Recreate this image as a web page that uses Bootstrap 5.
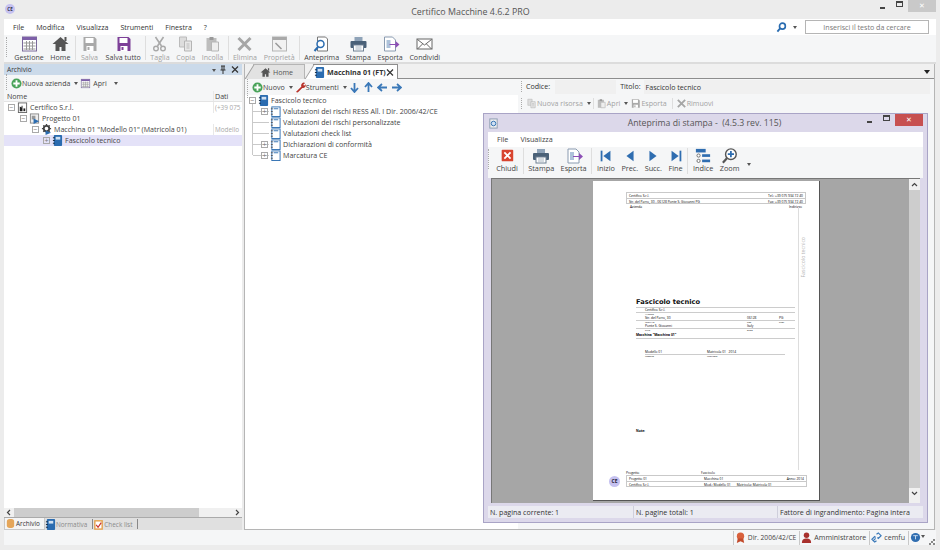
<!DOCTYPE html>
<html lang="it">
<head>
<meta charset="utf-8">
<title>Certifico Macchine</title>
<link href="https://cdn.jsdelivr.net/npm/bootstrap@5.3.1/dist/css/bootstrap.min.css" rel="stylesheet">
<script src="https://cdn.jsdelivr.net/npm/bootstrap@5.3.1/dist/js/bootstrap.bundle.min.js"></script>
<style>
html,body {height:550px;overflow:hidden;}
body {background:#ececec;color:#444;font-family:"Open Sans","Liberation Sans",sans-serif;font-size:7.1px;line-height:11px;}
.app {width:940px;height:550px;position:relative;}
.ttl-bar {height:19px;background:#ececec;}
.ttl-txt {font-size:8.9px;color:#555;line-height:15px;padding-left:52px;}
.app-logo {width:10px;height:10px;border-radius:50%;background:#c5c1f0;color:#334;font-size:4.5px;line-height:10px;text-align:center;font-weight:700;margin:4px 0 0 5px;flex:none;}
.win-btn {width:17px;height:12px;color:#555;}
.win-close {width:28px;height:12px;background:#c9c9c9;color:#fff;margin-right:4px;font-size:7px;line-height:11px;text-align:center;}
.win-min {width:5px;height:2px;background:#444;margin:7px auto 0;}
.win-max {width:7px;height:6px;border:1px solid #444;border-top-width:2px;margin:1px auto 0;}
.menu-bar {height:16px;background:#fff;margin:0 4px;padding-left:9px;gap:12px;color:#333;font-size:7.1px;}
.srch-box {width:124px;height:14px;border:1px solid #b5b5b5;color:#777;text-align:center;line-height:12px;margin-right:7px;font-size:7.1px;}
.main-tb {height:29px;background:#f5f6f7;margin:0 4px;border-bottom:2px solid #dcdcdc;}
.grip {width:2px;height:20px;border-left:1px dotted #aaa;margin:2px 3px 0 2px;flex:none;}
.tb-item {padding:1px 3.3px 0;text-align:center;white-space:nowrap;color:#444;}
.tb-item svg {display:block;margin:0 auto;height:16px;width:19px;}
.tb-off {color:#a2a2a2;}
.tb-sep {width:1px;height:24px;background:#dedede;margin:1px;flex:none;}
.save-off {color:#a9a9a9;}
.save-all {color:#7d3f98;}
.work {height:466px;margin:0 5px 0 4px;gap:2px;}
.side {width:238px;background:#fff;}
.side-hd {height:11px;background:#cbdaea;padding:0 3px;color:#333;font-size:6.6px;}
.hd-ic {width:8px;height:9px;flex:none;}
.hd-pin {margin:0 4px 0 1px;}
.side-tb {height:16px;background:#f5f6f7;color:#444;font-size:7px;}
.col-hd {height:11px;background:#f5f6f7;border-bottom:1px solid #e4e4e4;padding:0 0 0 3px;}
.col-dati {width:29px;border-left:1px solid #e8e8e8;padding-left:1px;overflow:hidden;white-space:nowrap;flex:none;}
.tr-row {height:11px;white-space:nowrap;position:relative;}
.tr-sel {background:#e4e2f8;}
.tr-name {flex:1;}
.gray-t {color:#a8a8a8;font-size:6.4px;}
.tog {width:7px;height:7px;border:1px solid #a9a9a9;color:#777;font-size:7px;line-height:5px;text-align:center;flex:none;margin-right:2px;position:relative;}
.tog-off {visibility:hidden;}
.ind1 {padding-left:4px;}
.ind2 {padding-left:16px;}
.ind3 {padding-left:28px;}
.ind4 {padding-left:39px;}
.ic12 {width:11px;height:11px;flex:none;margin-right:2px;}
.hsb {height:9px;margin-top:auto;background:#f0f0f0;color:#555;align-items:center;}
.hsb svg {width:10px;height:9px;flex:none;}
.hsb-bar {width:185px;background:#cdcdcd;height:9px;}
.side-tabs {height:13px;background:#e0e0e0;border-top:1px solid #aaa;font-size:6.4px;}
.stab {padding:0 5px 0 0;color:#8a8a8a;border-right:1px solid #888;margin:1px 0;}
.stab .ic12 {margin-right:0;}
.stab-on {background:#f5f5f5;color:#333;border:1px solid #c9c9c9;border-top:0;margin:0 0 0 0;padding-right:4px;}
.right {flex:1;background:#fff;border-left:1px solid #b5b5b5;border-right:1px solid #b5b5b5;border-bottom:1px solid #b5b5b5;}
.tabs-row {height:15px;background:#f0f0f0;border-bottom:1px solid #8d8d8d;padding-left:8px;}
.tab-a {height:15px;padding:0 4px 0 7px;position:relative;}
.tab-a::before {content:"";position:absolute;left:-4px;top:-0px;bottom:0;width:9px;transform:skewX(-32deg);background:inherit;border-left:1px solid #9c9c9c;}
.tab-a > * {position:relative;}
.tab-h {width:52px;background:#e2e2e2;border:1px solid #b5b5b5;border-width:1px 1px 0 0;color:#555;}
.tab-m {width:85px;margin-left:8px;padding-left:1px;background:#fff;border:1px solid #8d8d8d;border-width:1px 1px 0 0;height:15px;font-weight:700;font-size:7.1px;color:#333;}
.tab-arrow {width:0;height:0;border:3px solid transparent;border-top:4px solid #222;margin:6px 4px 0 auto;}
.right-body {height:calc(100% - 15px);}
.tree-pane {width:273px;}
.pane-tb {height:16px;background:#f5f6f7;color:#444;}
.tree2 {padding:0 0 0 4px;position:relative;}
.tree2::before {content:"";position:absolute;left:7px;top:8px;height:52px;border-left:1px solid #c9c9c9;}
.tr-kid {padding-left:12px;}
.tr-kid::before {content:"";position:absolute;left:4px;top:5px;width:16px;border-top:1px solid #c9c9c9;}
.tr-kid > * {position:relative;}
.det-pane {flex:1;background:#f5f6f7;}
.det-row1 {height:15px;color:#333;padding-left:1px;}
.det-row1 .grip {height:11px;margin-top:0;}
.det-fld {background:#f0f0f0;height:14px;line-height:14px;}
.cod-fld {width:61px;margin:0 4px 0 5px;}
.title-fld {flex:1;margin:0 4px 0 3px;padding-left:2px;}
.det-row2 {height:16px;color:#a2a2a2;padding-left:1px;margin-top:1px;}
.det-row2 .grip {height:11px;margin-top:0;}
.det-row2 .tb-sep {height:11px;margin:0 2px 0 0;}
.det-row2 .sep-w {margin:0 3px 0 5px;}
.arw {width:11px;height:11px;flex:none;margin-right:3px;}
.caret-s {width:0;height:0;border:2.5px solid transparent;border-top:3px solid #555;margin:3px 2px 0 4px;flex:none;}
.car-apri {margin-left:7px;}
.status {height:15px;margin:0 4px;background:#f5f6f7;justify-content:flex-end;color:#444;}
.st-item {padding:0 3px 0 1px;border-left:1px solid #c8c8c8;height:14px;white-space:nowrap;}
.st-dir {font-size:6.7px;}
.st-grip {width:8px;height:14px;flex:none;}
.st-grip svg {display:block;margin:8px 0 0 1px;width:6px;height:6px;}
.prev-win {position:absolute;left:483px;top:113px;width:445px;height:410px;background:#dcd8ea;border:1px solid #a9a4c6;}
.prev-tt {height:18px;color:#555;}
.prev-title {flex:1;text-align:center;padding-left:47px;font-size:8.7px;white-space:pre;}
.prev-close {width:28px;height:12px;background:#c75050;color:#fff;text-align:center;font-size:7px;line-height:11px;margin-right:4px;align-self:flex-start;}
.prev-tt .win-btn {align-self:flex-start;}
.prev-menu {height:15px;background:#fff;margin:0 4px;padding-left:9px;gap:12px;font-size:7.2px;}
.prev-tb {height:31px;background:#f5f6f7;margin:0 4px;font-size:7.3px;}
.prev-tb .grip {margin-left:0;}
.prev-tb .tb-item {padding:1px 3.2px 0;line-height:9px;display:flex;flex-direction:column;align-items:center;}
.prev-tb .tb-item svg {height:16px;width:20px;margin:0 -5px;flex:none;}
.prev-tb .tb-sep {height:26px;margin:1px 1.5px 0;}
.prev-area {height:325px;margin:0 7px;background:#a6a6a6;border:1px solid #777;border-width:1px 0 0 1px;}
.sheet {width:227px;height:320px;margin:2px 0 0 101px;background:#fff;border-right:1px solid #555;border-bottom:1px solid #555;padding:11px 13px 0 33px;position:relative;flex:none;}
.vsb {width:11px;margin-left:auto;background:#f0f0f0;}
.vsb svg {display:block;width:11px;height:11px;}
.vsb-bar {height:298px;background:#cdcdcd;}
.tiny {font-size:3.3px;line-height:5px;color:#000;white-space:nowrap;}
.hd-box {border:1px solid #c9c9c9;}
.hd-line {height:5px;padding:0 2px;}
.hd-line + .hd-line {border-top:1px solid #c9c9c9;}
.rail {position:absolute;left:205px;top:26px;width:9px;height:263px;border-left:1px solid #ddd;color:#b5b5b5;font-size:5.2px;}
.rail-txt {writing-mode:vertical-rl;transform:rotate(180deg);margin-top:30px;line-height:9px;}
.doc-title {font-size:6.7px;font-weight:700;line-height:10px;margin:88px 0 0 10px;color:#111;font-family:"DejaVu Sans",sans-serif;}
.doc-sec {margin-left:10px;width:159px;border-top:1px solid #ccc;}
.doc-val {height:4px;line-height:4px;padding-left:9px;border-bottom:1px solid #ccc;box-sizing:content-box;}
.doc-lab {height:3px;line-height:3px;padding-left:9px;font-size:2.4px;}
.cell-a {width:102px;}
.cell-b {width:32px;}
.doc-mac {height:5px;line-height:5px;font-weight:700;border-bottom:1px solid #ccc;padding-bottom:1px;box-sizing:content-box;}
.doc-mod {margin:11px 0 0 19px;width:140px;}
.doc-mod .doc-val {padding-left:0;}
.doc-mod .doc-lab {padding-left:0;}
.cell-m {width:62px;}
.doc-note {margin:70px 0 0 10px;font-weight:700;}
.sheet-ft {position:absolute;left:16px;top:289px;}
.ft-logo {width:11px;height:11px;border-radius:50%;background:#c5c1f0;color:#223;font-size:5px;line-height:11px;text-align:center;font-weight:700;margin:6px 6px 0 0;flex:none;}
.ft-box {width:181px;border:1px solid #c9c9c9;}
.ft-cell {width:75px;}
.prev-stat {height:12px;margin:3px 4px 0;background:#ebebf2;color:#333;}
.pst {padding:0 2px;line-height:12px;white-space:pre;}
.pst-a {width:145px;}
.pst-b {width:144px;}
.pst + .pst {border-left:1px solid #cfcfdc;}
</style>
</head>
<body>
<svg class="d-none" xmlns="http://www.w3.org/2000/svg">
<symbol id="i-cal" viewBox="0 0 18 16"><rect x="2" y="1" width="14" height="14" fill="#fff" stroke="#7a6a9a"/><rect x="2" y="1" width="14" height="3" fill="#7d5fa8"/><path d="M3 7h12M3 10h12M3 13h12M6 5v9M9 5v9M12 5v9" stroke="#999"/></symbol>
<symbol id="i-home" viewBox="0 0 18 16"><path d="M9 1 1 8h3v7h4v-4h2v4h4V8h3z" fill="#555"/><rect x="13" y="1" width="2" height="4" fill="#555"/></symbol>
<symbol id="i-save" viewBox="0 0 18 16"><path d="M3 1h11l2 2v12H3z" fill="currentColor"/><rect x="5" y="2" width="8" height="5" fill="#fff"/><rect x="6" y="10" width="7" height="5" fill="#fff"/><rect x="7" y="11" width="2" height="3" fill="currentColor"/></symbol>
<symbol id="i-cut" viewBox="0 0 18 16"><path d="M5 1l6 9M13 1 7 10" stroke="#a9a9a9" stroke-width="1.6" fill="none"/><circle cx="5.5" cy="12.5" r="2.3" fill="none" stroke="#a9a9a9" stroke-width="1.4"/><circle cx="12.5" cy="12.5" r="2.3" fill="none" stroke="#a9a9a9" stroke-width="1.4"/></symbol>
<symbol id="i-copy" viewBox="0 0 18 16"><path d="M3 1h7v10H3z" fill="#ddd" stroke="#bbb"/><path d="M8 5h7v10H8z" fill="#e8e8e8" stroke="#b5b5b5"/><path d="M10 8h3M10 10h3M10 12h3" stroke="#bbb"/></symbol>
<symbol id="i-paste" viewBox="0 0 18 16"><rect x="3" y="2" width="10" height="13" fill="#bdbdbd"/><rect x="6" y="1" width="4" height="3" fill="#999"/><path d="M8 6h7v9H8z" fill="#eee" stroke="#b5b5b5"/></symbol>
<symbol id="i-del" viewBox="0 0 18 16"><path d="M3 2l12 12M15 2 3 14" stroke="#a6a6a6" stroke-width="3"/></symbol>
<symbol id="i-prop" viewBox="0 0 18 16"><rect x="2" y="1" width="14" height="14" fill="#f2f2f2" stroke="#b5b5b5"/><rect x="2" y="1" width="14" height="3" fill="#a9a9a9"/><path d="M5 7l6 6" stroke="#999" stroke-width="1.5"/></symbol>
<symbol id="i-prev" viewBox="0 0 18 16"><path d="M5 1h8l2 2v12H5z" fill="#fff" stroke="#777"/><circle cx="8" cy="8" r="3.5" fill="#fff" stroke="#2a6cb0" stroke-width="1.5"/><path d="M5.5 11 2 15" stroke="#2a6cb0" stroke-width="2"/></symbol>
<symbol id="i-print" viewBox="0 0 18 16"><rect x="5" y="1" width="8" height="4" fill="#8fa3b8"/><rect x="1" y="5" width="16" height="7" rx="1" fill="#4a6178"/><rect x="4" y="9" width="10" height="6" fill="#fff" stroke="#6d7f92"/><path d="M6 11h6M6 13h6" stroke="#a9b6c2"/></symbol>
<symbol id="i-exp" viewBox="0 0 18 16"><path d="M3 1h8l3 3v11H3z" fill="#fff" stroke="#8a9bb0"/><path d="M5 5h4M5 7h4M5 9h4M5 11h4" stroke="#5d86b5"/><path d="M8 8h6V5l4 3.5L14 12V9H8z" fill="#8c4fb5"/></symbol>
<symbol id="i-mail" viewBox="0 0 18 16"><rect x="1.500" y="3" width="15" height="10" fill="#fff" stroke="#666"/><path d="M2 3.500 9 9l7-5.500M2 13l5-5M16 13l-5-5" stroke="#666" fill="none"/></symbol>
<symbol id="i-plus" viewBox="0 0 12 12"><circle cx="6" cy="6" r="5.500" fill="#4aa35a"/><path d="M6 2.500v7M2.500 6h7" stroke="#fff" stroke-width="2"/></symbol>
<symbol id="i-wr" viewBox="0 0 12 12"><path d="M1 11 7 5a3 3 0 0 1 4-4L9 3l1 1 1.500-1.500A3 3 0 0 1 8 6.500L3 11.500z" fill="#b8322a"/></symbol>
<symbol id="i-book" viewBox="0 0 12 12"><rect x="2" y="0" width="9" height="12" rx="1" fill="#2b6cb0"/><rect x="4" y="2" width="5" height="3" fill="#cfe0f2"/><path d="M1 3h2M1 6h2M1 9h2" stroke="#123"/></symbol>
<symbol id="i-page" viewBox="0 0 12 12"><rect x="2" y="1" width="9" height="10.500" fill="#fff" stroke="#2b6cb0"/><path d="M4 3h5" stroke="#2b6cb0"/><path d="M1 3h2M1 6h2M1 9h2" stroke="#555"/></symbol>
<symbol id="i-co" viewBox="0 0 12 12"><rect x="1.500" y="1" width="9" height="10.500" fill="#fff" stroke="#666"/><path d="M3 10V5l2 1V4h1v6z" fill="#222"/><path d="M7 10V7h2v3z" fill="#222"/></symbol>
<symbol id="i-pj" viewBox="0 0 12 12"><rect x="1.500" y="1" width="9" height="10" fill="#eee" stroke="#888"/><rect x="3" y="3" width="4" height="4" fill="#999"/><path d="M5 6l6 3-6 3z" fill="#2b6cb0"/></symbol>
<symbol id="i-gear" viewBox="0 0 12 12"><circle cx="6" cy="5" r="3" fill="none" stroke="#444" stroke-width="2"/><path d="M6 0v2M6 8v2M1 5h2M9 5h2M2.500 1.500l1.500 1.500M8 7l1.500 1.500M9.500 1.500 8 3M4 7 2.500 8.500" stroke="#444" stroke-width="1.500"/><path d="M5 7l6 2.500L5 12z" fill="#2b6cb0"/></symbol>
<symbol id="i-down" viewBox="0 0 11 11"><path d="M5.500 1v8M2 6l3.500 4L9 6" stroke="#3a78b8" stroke-width="1.800" fill="none"/></symbol>
<symbol id="i-up" viewBox="0 0 11 11"><path d="M5.500 10V2M2 5l3.500-4L9 5" stroke="#3a78b8" stroke-width="1.800" fill="none"/></symbol>
<symbol id="i-left" viewBox="0 0 11 11"><path d="M10 5.500H2M5 2 1 5.500 5 9" stroke="#3a78b8" stroke-width="1.800" fill="none"/></symbol>
<symbol id="i-right" viewBox="0 0 11 11"><path d="M1 5.500h8M6 2l4 3.500L6 9" stroke="#3a78b8" stroke-width="1.800" fill="none"/></symbol>
<symbol id="i-lens" viewBox="0 0 12 12"><circle cx="7" cy="4.500" r="3.200" fill="none" stroke="#2a6cb0" stroke-width="1.800"/><path d="M4.500 7 1.500 10.500" stroke="#2a6cb0" stroke-width="2"/></symbol>
<symbol id="i-stop" viewBox="0 0 20 18"><rect x="4" y="2" width="13" height="13" rx="1" fill="#d8442f"/><path d="M7 5l7 7M14 5l-7 7" stroke="#fff" stroke-width="2"/></symbol>
<symbol id="i-first" viewBox="0 0 20 18"><rect x="4" y="3" width="2" height="12" fill="#2f6db0"/><path d="M15 3v12L7 9z" fill="#2f6db0"/></symbol>
<symbol id="i-prv" viewBox="0 0 20 18"><path d="M14 3v12L6 9z" fill="#2f6db0"/></symbol>
<symbol id="i-nxt" viewBox="0 0 20 18"><path d="M6 3v12l8-6z" fill="#2f6db0"/></symbol>
<symbol id="i-last" viewBox="0 0 20 18"><rect x="14" y="3" width="2" height="12" fill="#2f6db0"/><path d="M5 3v12l8-6z" fill="#2f6db0"/></symbol>
<symbol id="i-idx" viewBox="0 0 20 18"><rect x="2" y="1" width="11" height="4" fill="#2f6db0"/><rect x="9" y="7" width="9" height="3" fill="#2f6db0"/><rect x="9" y="13" width="9" height="3" fill="#2f6db0"/><circle cx="5" cy="8.500" r="1.800" fill="#fff" stroke="#666"/><circle cx="5" cy="14.500" r="1.800" fill="#fff" stroke="#666"/></symbol>
<symbol id="i-zoom" viewBox="0 0 20 18"><circle cx="11" cy="7" r="6" fill="#fff" stroke="#555" stroke-width="1.600"/><path d="M11 3.500v7M7.500 7h7" stroke="#2f6db0" stroke-width="2"/><path d="M6.500 11.500 2 16.500" stroke="#555" stroke-width="2.500"/></symbol>
<symbol id="i-doc" viewBox="0 0 12 12"><rect x="2" y="1" width="8" height="10" fill="#eee" stroke="#8a9bb0"/><circle cx="6" cy="6" r="2.500" fill="#cfe0f2" stroke="#2a6cb0"/></symbol>
<symbol id="i-rib" viewBox="0 0 12 12"><circle cx="6" cy="4.500" r="4" fill="#d8613c"/><path d="M3 7 2 12l4-2 4 2-1-5z" fill="#c24a2b"/></symbol>
<symbol id="i-user" viewBox="0 0 12 12"><circle cx="6" cy="3.500" r="3" fill="#a8302c"/><path d="M1 12c0-4 2-5 5-5s5 1 5 5z" fill="#a8302c"/></symbol>
<symbol id="i-link" viewBox="0 0 12 12"><path d="M2 10 5 7M6 2.500l2-1.500 3 3-3 3-1-1M6 9.500 4 11 1 8l3-3 1 1" stroke="#3a78b8" fill="none" stroke-width="1.300"/></symbol>
<symbol id="i-glob" viewBox="0 0 12 12"><circle cx="6" cy="6" r="5" fill="#2f6db0"/><path d="M3.500 4h5M6 4v4" stroke="#cfe0f2"/></symbol>
<symbol id="i-db" viewBox="0 0 12 12"><rect x="2" y="1" width="8" height="10" rx="3" fill="#e5a65a"/></symbol>
<symbol id="i-chk" viewBox="0 0 12 12"><rect x="2" y="2" width="8" height="9" fill="#fff" stroke="#e5a04a" stroke-width="1.500"/><path d="M3.500 6.500 5.500 9 9 4" stroke="#c9302c" fill="none" stroke-width="1.300"/></symbol>
<symbol id="i-pin" viewBox="0 0 8 9"><path d="M2 1h4M3 1v4M5 1v4M1.500 5h5M4 5v4" stroke="#333" fill="none"/></symbol>
<symbol id="i-x" viewBox="0 0 8 9"><path d="M1 1.500l6 6M7 1.500l-6 6" stroke="#333" stroke-width="1.200"/></symbol>
<symbol id="c-l" viewBox="0 0 10 9"><path d="M6 2 3.500 4.500 6 7" stroke="#444" stroke-width="1.200" fill="none"/></symbol>
<symbol id="c-r" viewBox="0 0 10 9"><path d="M4 2l2.500 2.500L4 7" stroke="#444" stroke-width="1.200" fill="none"/></symbol>
<symbol id="c-u" viewBox="0 0 11 11"><path d="M3 7l2.500-2.500L8 7" stroke="#444" stroke-width="1.200" fill="none"/></symbol>
<symbol id="c-d" viewBox="0 0 11 11"><path d="M3 4l2.500 2.500L8 4" stroke="#444" stroke-width="1.200" fill="none"/></symbol>
<symbol id="i-grp" viewBox="0 0 6 6"><path d="M4 0h2v2H4zM2 2h2v2H2zM0 4h2v2H0zM4 4h2v2H4z" fill="#888"/></symbol>
</svg>

<div class="app d-flex flex-column">

  <div class="ttl-bar d-flex">
    <div class="app-logo">CE</div>
    <div class="ttl-txt flex-grow-1 text-center pt-1">Certifico Macchine 4.6.2 PRO</div>
    <div class="win-btn"><div class="win-min"></div></div>
    <div class="win-btn"><div class="win-max"></div></div>
    <div class="win-close">✕</div>
  </div>

  <div class="menu-bar d-flex align-items-center">
    <span>File</span><span>Modifica</span><span>Visualizza</span><span>Strumenti</span><span>Finestra</span><span>?</span>
    <div class="ms-auto d-flex align-items-center">
      <svg class="ic12"><use href="#i-lens"/></svg><span class="caret-s me-2"></span>
      <div class="srch-box">Inserisci il testo da cercare</div>
    </div>
  </div>

  <div class="main-tb d-flex">
    <div class="grip"></div>
    <div class="tb-item"><svg><use href="#i-cal"/></svg>Gestione</div>
    <div class="tb-item"><svg><use href="#i-home"/></svg>Home</div>
    <div class="tb-sep"></div>
    <div class="tb-item tb-off"><svg class="save-off"><use href="#i-save"/></svg>Salva</div>
    <div class="tb-item"><svg class="save-all"><use href="#i-save"/></svg>Salva tutto</div>
    <div class="tb-sep"></div>
    <div class="tb-item tb-off"><svg><use href="#i-cut"/></svg>Taglia</div>
    <div class="tb-item tb-off"><svg><use href="#i-copy"/></svg>Copia</div>
    <div class="tb-item tb-off"><svg><use href="#i-paste"/></svg>Incolla</div>
    <div class="tb-sep"></div>
    <div class="tb-item tb-off"><svg><use href="#i-del"/></svg>Elimina</div>
    <div class="tb-item tb-off"><svg><use href="#i-prop"/></svg>Proprietà</div>
    <div class="tb-sep"></div>
    <div class="tb-item"><svg><use href="#i-prev"/></svg>Anteprima</div>
    <div class="tb-item"><svg><use href="#i-print"/></svg>Stampa</div>
    <div class="tb-item"><svg><use href="#i-exp"/></svg>Esporta</div>
    <div class="tb-item"><svg><use href="#i-mail"/></svg>Condividi</div>
  </div>

  <div class="work d-flex">
    <div class="side d-flex flex-column">
      <div class="side-hd d-flex align-items-center">
        <span>Archivio</span>
        <span class="caret-s ms-auto"></span><svg class="hd-ic hd-pin"><use href="#i-pin"/></svg><svg class="hd-ic"><use href="#i-x"/></svg>
      </div>
      <div class="side-tb d-flex align-items-center">
        <div class="grip"></div>
        <svg class="ic12 mx-0"><use href="#i-plus"/></svg><span>Nuova azienda</span><span class="caret-s"></span>
        <svg class="ic12"><use href="#i-cal"/></svg><span>Apri</span><span class="caret-s car-apri"></span>
      </div>
      <div class="col-hd d-flex"><span class="tr-name">Nome</span><span class="col-dati">Dati</span></div>
      <div class="side-tree">
        <div class="tr-row d-flex align-items-center ind1"><span class="tog">−</span><svg class="ic12"><use href="#i-co"/></svg><span class="tr-name">Certifico S.r.l.</span><span class="col-dati gray-t">(+39 075</span></div>
        <div class="tr-row d-flex align-items-center ind2"><span class="tog">−</span><svg class="ic12"><use href="#i-pj"/></svg><span class="tr-name">Progetto 01</span></div>
        <div class="tr-row d-flex align-items-center ind3"><span class="tog">−</span><svg class="ic12"><use href="#i-gear"/></svg><span class="tr-name">Macchina 01 "Modello 01" (Matricola 01)</span><span class="col-dati gray-t">Modello</span></div>
        <div class="tr-row tr-sel d-flex align-items-center ind4"><span class="tog">+</span><svg class="ic12"><use href="#i-book"/></svg><span class="tr-name">Fascicolo tecnico</span><span class="col-dati"></span></div>
      </div>
      <div class="hsb d-flex"><svg><use href="#c-l"/></svg><div class="hsb-bar"></div><svg class="ms-auto"><use href="#c-r"/></svg></div>
      <div class="side-tabs d-flex">
        <div class="stab stab-on d-flex align-items-center"><svg class="ic12"><use href="#i-db"/></svg>Archivio</div>
        <div class="stab d-flex align-items-center"><svg class="ic12"><use href="#i-book"/></svg>Normativa</div>
        <div class="stab d-flex align-items-center"><svg class="ic12"><use href="#i-chk"/></svg>Check list</div>
      </div>
    </div>

    <div class="right">
      <div class="tabs-row d-flex">
        <div class="tab-a tab-h d-flex align-items-center"><svg class="ic12"><use href="#i-home"/></svg><span>Home</span></div>
        <div class="tab-a tab-m d-flex align-items-center text-nowrap"><svg class="ic12"><use href="#i-book"/></svg><span>Macchina 01 (FT)</span><svg class="hd-ic ms-auto"><use href="#i-x"/></svg></div>
        <span class="tab-arrow"></span>
      </div>
      <div class="right-body d-flex">
        <div class="tree-pane">
          <div class="pane-tb d-flex align-items-center">
            <div class="grip"></div>
            <svg class="ic12 mx-0"><use href="#i-plus"/></svg><span>Nuovo</span><span class="caret-s"></span>
            <svg class="ic12 mx-0"><use href="#i-wr"/></svg><span>Strumenti</span><span class="caret-s"></span>
            <svg class="arw"><use href="#i-down"/></svg><svg class="arw"><use href="#i-up"/></svg><svg class="arw"><use href="#i-left"/></svg><svg class="arw"><use href="#i-right"/></svg>
          </div>
          <div class="tree2">
            <div class="tr-row d-flex align-items-center"><span class="tog">−</span><svg class="ic12"><use href="#i-book"/></svg><span>Fascicolo tecnico</span></div>
            <div class="tr-row tr-kid d-flex align-items-center"><span class="tog">+</span><svg class="ic12"><use href="#i-page"/></svg><span>Valutazioni dei rischi RESS All. I Dir. 2006/42/CE</span></div>
            <div class="tr-row tr-kid d-flex align-items-center"><span class="tog tog-off"></span><svg class="ic12"><use href="#i-page"/></svg><span>Valutazioni dei rischi personalizzate</span></div>
            <div class="tr-row tr-kid d-flex align-items-center"><span class="tog tog-off"></span><svg class="ic12"><use href="#i-page"/></svg><span>Valutazioni check list</span></div>
            <div class="tr-row tr-kid d-flex align-items-center"><span class="tog">+</span><svg class="ic12"><use href="#i-page"/></svg><span>Dichiarazioni di conformità</span></div>
            <div class="tr-row tr-kid d-flex align-items-center"><span class="tog">+</span><svg class="ic12"><use href="#i-page"/></svg><span>Marcatura CE</span></div>
          </div>
        </div>
        <div class="det-pane">
          <div class="det-row1 d-flex align-items-center">
            <div class="grip"></div><span>Codice:</span><div class="det-fld cod-fld"></div><span>Titolo:</span><div class="det-fld title-fld">Fascicolo tecnico</div>
          </div>
          <div class="det-row2 d-flex align-items-center">
            <div class="grip"></div>
            <svg class="ic12 mx-0"><use href="#i-copy"/></svg><span>Nuova risorsa</span><span class="caret-s"></span><span class="tb-sep"></span>
            <svg class="ic12 mx-0"><use href="#i-paste"/></svg><span>Apri</span><span class="caret-s"></span>
            <svg class="ic12 mx-0 save-off"><use href="#i-save"/></svg><span>Esporta</span><span class="tb-sep sep-w"></span>
            <svg class="ic12 mx-0"><use href="#i-del"/></svg><span>Rimuovi</span>
          </div>
        </div>
      </div>
    </div>
  </div>

  <div class="status d-flex align-items-center">
    <div class="st-item st-dir d-flex align-items-center"><svg class="ic12"><use href="#i-rib"/></svg>Dir. 2006/42/CE</div>
    <div class="st-item d-flex align-items-center"><svg class="ic12"><use href="#i-user"/></svg>Amministratore</div>
    <div class="st-item d-flex align-items-center"><svg class="ic12"><use href="#i-link"/></svg>cemfu</div>
    <div class="st-item d-flex align-items-center"><svg class="ic12 mx-0"><use href="#i-glob"/></svg><span class="caret-s m-0"></span></div>
    <div class="st-grip"><svg><use href="#i-grp"/></svg></div>
  </div>

  <!-- finestra anteprima, sta sopra il resto -->
  <div class="prev-win">
    <div class="prev-tt d-flex align-items-center">
      <svg class="ic12 ms-1"><use href="#i-doc"/></svg>
      <div class="prev-title">Anteprima di stampa -  (4.5.3 rev. 115)</div>
      <div class="win-btn"><div class="win-min"></div></div>
      <div class="win-btn"><div class="win-max"></div></div>
      <div class="prev-close">✕</div>
    </div>
    <div class="prev-menu d-flex align-items-center"><span>File</span><span>Visualizza</span></div>
    <div class="prev-tb d-flex">
      <div class="grip"></div>
      <div class="tb-item"><svg><use href="#i-stop"/></svg>Chiudi</div>
      <div class="tb-sep"></div>
      <div class="tb-item"><svg><use href="#i-print"/></svg>Stampa</div>
      <div class="tb-item"><svg><use href="#i-exp"/></svg>Esporta</div>
      <div class="tb-sep"></div>
      <div class="tb-item"><svg><use href="#i-first"/></svg>Inizio</div>
      <div class="tb-item"><svg><use href="#i-prv"/></svg>Prec.</div>
      <div class="tb-item"><svg><use href="#i-nxt"/></svg>Succ.</div>
      <div class="tb-item"><svg><use href="#i-last"/></svg>Fine</div>
      <div class="tb-sep"></div>
      <div class="tb-item"><svg><use href="#i-idx"/></svg>Indice</div>
      <div class="tb-item"><svg><use href="#i-zoom"/></svg>Zoom</div>
      <span class="caret-s mt-3"></span>
    </div>
    <div class="prev-area d-flex">
      <div class="sheet">
        <div class="hd-box tiny">
          <div class="hd-line d-flex justify-content-between"><span>Certifico S.r.l.</span><span>Tel.: +39 075 934 72 40</span></div>
          <div class="hd-line d-flex justify-content-between"><span>Str. del Parro, 30 - 06128 Ponte S. Giovanni PG</span><span>Fax: +39 075 934 72 40</span></div>
        </div>
        <div class="tiny d-flex justify-content-between px-1"><span>Azienda</span><span>Indirizzo</span></div>
        <div class="rail"><div class="rail-txt">Fascicolo tecnico</div></div>
        <div class="doc-title">Fascicolo tecnico</div>
        <div class="doc-sec tiny">
          <div class="doc-val">Certifico S.r.l.</div>
          <div class="doc-lab">Azienda</div>
          <div class="doc-val d-flex"><span class="cell-a">Str. del Parro, 30</span><span class="cell-b">06128</span><span>PG</span></div>
          <div class="doc-lab d-flex"><span class="cell-a">Indirizzo</span><span class="cell-b">Cap</span><span>Prov.</span></div>
          <div class="doc-val d-flex"><span class="cell-a">Ponte S. Giovanni</span><span>Italy</span></div>
          <div class="doc-lab d-flex"><span class="cell-a">Città</span><span>Stato</span></div>
          <div class="doc-mac">Macchina "Macchina 01"</div>
        </div>
        <div class="doc-mod tiny">
          <div class="doc-val d-flex"><span class="cell-m">Modello 01</span><span>Matricola 01 &nbsp; 2014</span></div>
          <div class="doc-lab d-flex"><span class="cell-m">Modello</span><span>Matricola</span></div>
        </div>
        <div class="doc-note tiny">Note:</div>
        <div class="sheet-ft d-flex">
          <div class="ft-logo">CE</div>
          <div>
            <div class="tiny d-flex"><span class="ft-cell">Progetto</span><span>Fascicolo</span></div>
            <div class="ft-box tiny">
              <div class="hd-line d-flex"><span class="ft-cell">Progetto 01</span><span>Macchina 01</span><span class="ms-auto">Anno: 2014</span></div>
              <div class="hd-line d-flex"><span class="ft-cell">Certifico S.r.l.</span><span>Mod.: Modello 01 &nbsp; &nbsp; &nbsp; Matricola: Matricola 01</span></div>
            </div>
          </div>
        </div>
      </div>
      <div class="vsb"><svg><use href="#c-u"/></svg><div class="vsb-bar"></div><svg><use href="#c-d"/></svg></div>
    </div>
    <div class="prev-stat d-flex">
      <div class="pst pst-a">N. pagina corrente: 1</div>
      <div class="pst pst-b">N. pagine totali: 1</div>
      <div class="pst">Fattore di ingrandimento: Pagina intera</div>
    </div>
  </div>

</div>
</body>
</html>
